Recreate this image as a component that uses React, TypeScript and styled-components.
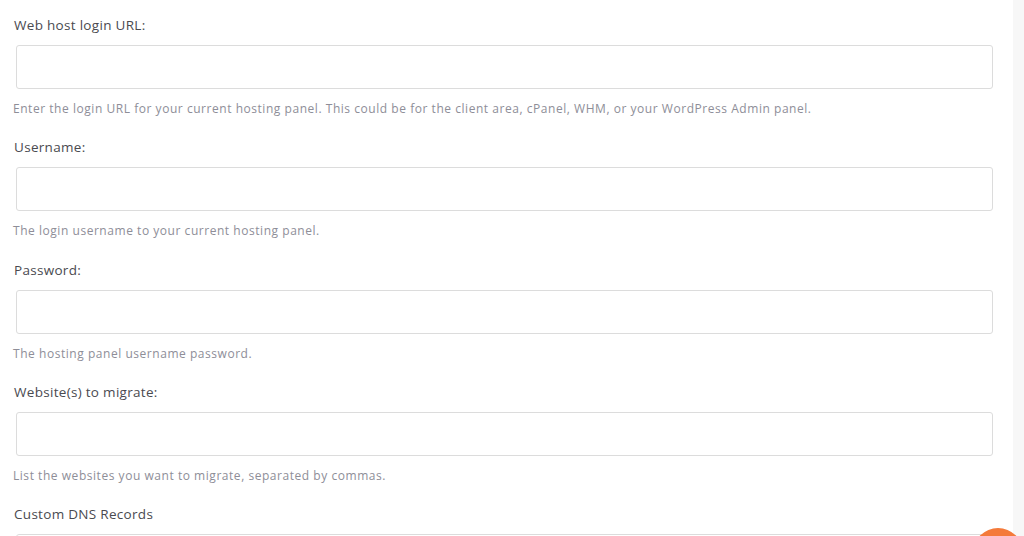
import React from "react";
import styled, { createGlobalStyle } from "styled-components";

const Global = createGlobalStyle`
  html, body { margin: 0; padding: 0; background: #ffffff; }
  body { font-family: "Open Sans", "Noto Sans", sans-serif; overflow: hidden; }
`;

const Page = styled.div`
  display: flex;
  width: 1024px;
  height: 536px;
  overflow: hidden;
  position: relative;
`;

const Main = styled.div`
  flex: 1;
  padding: 16px 20px 0 14px;
  display: flex;
  flex-direction: column;
`;

const Strip = styled.div`
  width: 11px;
  background: #f7f7f7;
`;

const Field = styled.div`
  display: flex;
  flex-direction: column;
  height: 122.3px;
  flex-shrink: 0;
`;

const Label = styled.label`
  font-size: 13.5px;
  line-height: 18px;
  color: #4a4a50;
  letter-spacing: 0.3px;
`;

const Input = styled.div`
  margin: 11px 0 0 2px;
  height: 42px;
  border: 1px solid #dcdcdc;
  border-radius: 3px;
  background: #fff;
  flex-shrink: 0;
`;

const Help = styled.p`
  margin: 12px 0 0 -1px;
  font-size: 12px;
  line-height: 16px;
  color: #8e8e98;
  letter-spacing: 0.54px;
`;

const Chat = styled.div`
  position: absolute;
  left: 973px;
  top: 528px;
  width: 50px;
  height: 50px;
  border-radius: 50%;
  background: #f47a3a;
`;

const fields = [
  {
    label: "Web host login URL:",
    help: "Enter the login URL for your current hosting panel. This could be for the client area, cPanel, WHM, or your WordPress Admin panel.",
  },
  { label: "Username:", help: "The login username to your current hosting panel." },
  { label: "Password:", help: "The hosting panel username password." },
  { label: "Website(s) to migrate:", help: "List the websites you want to migrate, separated by commas." },
];

export default function App() {
  return (
    <>
      <Global />
      <Page>
        <Main>
          {fields.map((f) => (
            <Field key={f.label}>
              <Label>{f.label}</Label>
              <Input />
              <Help>{f.help}</Help>
            </Field>
          ))}
          <Field>
            <Label>Custom DNS Records</Label>
            <Input />
          </Field>
        </Main>
        <Strip />
        <Chat />
      </Page>
    </>
  );
}
